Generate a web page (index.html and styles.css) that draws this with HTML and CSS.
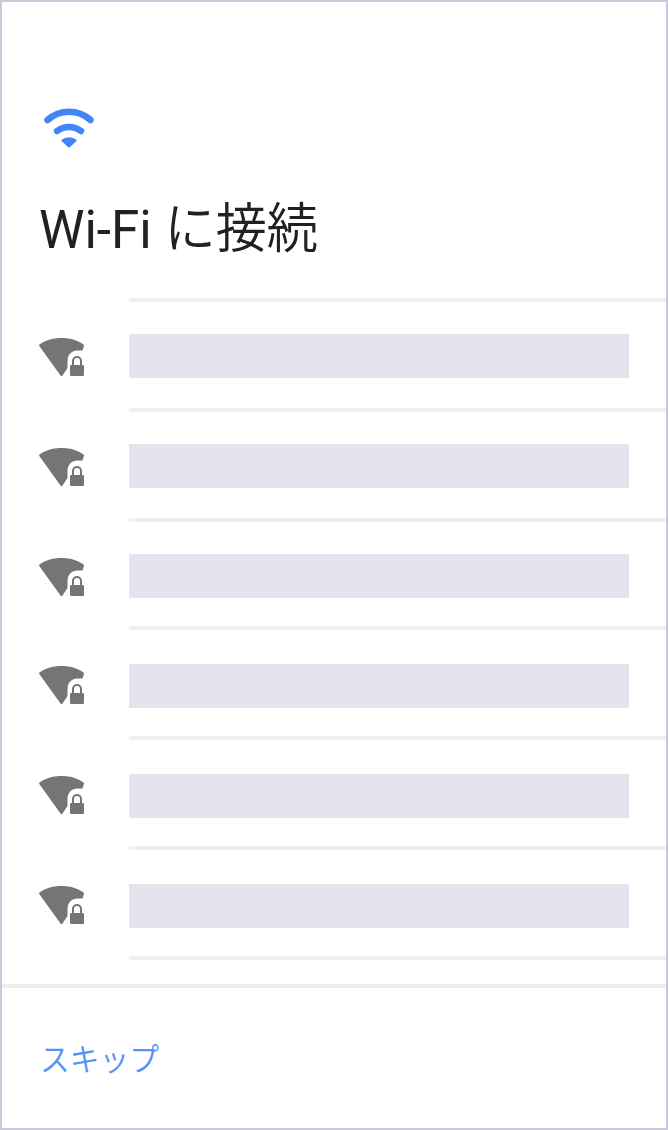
FILE: index.html
```html
<!DOCTYPE html>
<html lang="ja">
<head>
    <meta charset="UTF-8">
    <meta name="viewport" content="width=device-width, initial-scale=1.0">
    <title>Wi-Fi に接続</title>
    <link rel="stylesheet" href="styles.css">
</head>
<body>

<svg width="0" height="0" class="sprite">
    <symbol id="wifi-lock" viewBox="0 0 46 40">
        <path d="M.3 9Q-.3 8 .8 7.200C7 3 14 1 22.500 1S38 3 44.200 7.200Q45.600 8.200 44.800 9.500L43.500 13.500H38.500C32.500 13.500 28.500 18 28.500 24V31L23.500 38.500Q22.500 39.800 21.500 38.500z"/>
        <path fill-rule="evenodd" d="M33 28v-4a5 5 0 0 1 10 0V28h.8a1.200 1.200 0 0 1 1.200 1.200v8.600a1.200 1.200 0 0 1-1.200 1.200H32.200a1.200 1.200 0 0 1-1.200-1.200v-8.600A1.200 1.200 0 0 1 32.200 28zm2 0h6v-4a3 3 0 0 0-6 0z"/>
    </symbol>
</svg>

<div class="screen">
    <header>
        <svg class="wifi-icon" viewBox="0 0 52 40">
            <path class="arc" d="M4.500 12C17 1 35 1 47.500 12"/>
            <path class="arc" d="M14 23C21 17.500 31 17.500 38 23"/>
            <path class="dot" d="M20 32.500q6-3.500 12 0l-6 5.500z"/>
        </svg>
        <h1>Wi-Fi <span>に接続</span></h1>
    </header>

    <ul class="networks">
        <li><svg class="lock-icon"><use href="#wifi-lock"/></svg><div class="cell"><div class="name"></div></div></li>
        <li><svg class="lock-icon"><use href="#wifi-lock"/></svg><div class="cell"><div class="name"></div></div></li>
        <li class="short"><svg class="lock-icon"><use href="#wifi-lock"/></svg><div class="cell"><div class="name"></div></div></li>
        <li class="low"><svg class="lock-icon"><use href="#wifi-lock"/></svg><div class="cell"><div class="name"></div></div></li>
        <li class="low"><svg class="lock-icon"><use href="#wifi-lock"/></svg><div class="cell"><div class="name"></div></div></li>
        <li class="low"><svg class="lock-icon"><use href="#wifi-lock"/></svg><div class="cell"><div class="name"></div></div></li>
        <li class="end"><div class="cell"></div></li>
    </ul>

    <footer>
        <a class="skip">スキップ</a>
    </footer>
</div>

</body>
</html>
```
FILE: styles.css
```css
* {
    box-sizing: border-box;
}
body {
    margin: 0;
    background-color: #fff;
    font-family: Roboto, "Noto Sans CJK JP", sans-serif;
}
.sprite {
    display: block;
}
.screen {
    display: flex;
    flex-direction: column;
    width: 668px;
    height: 1130px;
    border: 2px solid #cbc8db;
}
header {
    height: 296px;
    padding: 106px 0 0 37px;
}
.wifi-icon {
    display: block;
    width: 52px;
    height: 40px;
    margin-left: 4px;
}
.arc {
    fill: none;
    stroke: #4285f4;
    stroke-width: 6.5;
    stroke-linecap: round;
}
.dot {
    fill: #4285f4;
    stroke: #4285f4;
    stroke-width: 3;
    stroke-linejoin: round;
}
h1 {
    margin: 44px 0 0;
    font-size: 54px;
    font-weight: 400;
    line-height: 76px;
    color: #212121;
    white-space: nowrap;
    transform: scaleX(0.948);
    transform-origin: left;
}
h1 span {
    font-weight: 350;
}
.networks {
    margin: 0;
    padding: 0;
    height: 686px;
    list-style: none;
}
.networks li {
    display: flex;
    height: 110px;
    padding-left: 37px;
}
.networks .short {
    height: 108px;
}
.networks .end {
    height: 4px;
    padding-left: 127px;
}
.lock-icon {
    width: 46px;
    height: 40px;
    margin: 39px 44px 0 0;
    fill: #757575;
}
.cell {
    flex: 1;
    padding: 32px 37px 0 0;
    border-top: 4px solid #f0f0f0;
}
.low .cell {
    padding-top: 34px;
}
.name {
    height: 44px;
    background-color: #e4e4ef;
}
footer {
    flex: 1;
    padding: 50px 0 0 38px;
    border-top: 4px solid #ededed;
}
.skip {
    display: block;
    font-size: 32px;
    font-weight: 350;
    line-height: 44px;
    color: #5592f7;
    transform: scaleX(0.93);
    transform-origin: left;
}
```
